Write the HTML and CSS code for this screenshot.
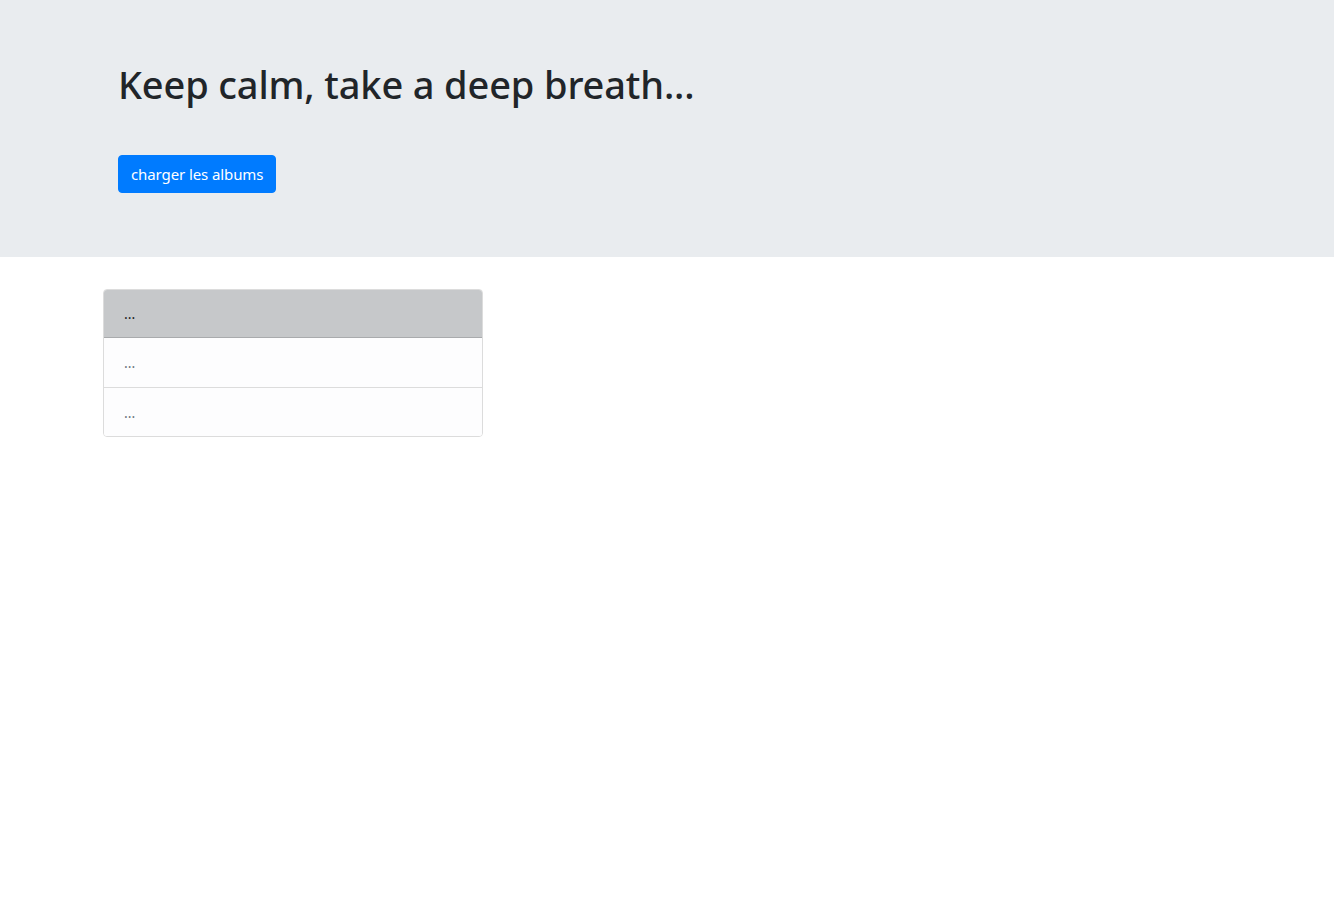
FILE: index.html
```html
<!DOCTYPE html>
<html lang="fr">
<head>
<meta charset="utf-8">
<title>Albums</title>
<link rel="stylesheet" href="styles.css">
</head>
<body>
<header class="jumbotron">
  <h1 class="title">Keep calm, take a deep breath...</h1>
  <button class="btn-primary" type="button">charger les albums</button>
</header>
<main class="content">
  <ul class="list-group">
    <li class="list-item active">...</li>
    <li class="list-item">...</li>
    <li class="list-item">...</li>
  </ul>
</main>
</body>
</html>
```
FILE: styles.css
```css
* { box-sizing: border-box; }
html, body { margin: 0; padding: 0; }
body {
  font-family: "Noto Sans", "Open Sans", "Liberation Sans", sans-serif;
  font-size: 16px;
  line-height: 1.5;
  color: #212529;
  background: #fff;
}
.jumbotron {
  background: #e9ecef;
  height: 257px;
  padding: 60px 0 0 118px;
  display: flex;
  flex-direction: column;
  align-items: flex-start;
}
.title {
  margin: 0;
  font-size: 38px;
  font-weight: 500;
  line-height: 48px;
  color: #212529;
  letter-spacing: -0.15px;
}
.btn-primary {
  margin-top: 47px;
  height: 38px;
  padding: 0 12px;
  background: #007bff;
  color: #fff;
  border: 1px solid #007bff;
  border-radius: 4px;
  font-family: inherit;
  font-size: 15px;
  letter-spacing: -0.1px;
}
.content {
  padding: 32px 0 0 103px;
}
.list-group {
  list-style: none;
  margin: 0;
  padding: 0;
  width: 380px;
  border: 1px solid #dcdcdc;
  border-radius: 4px;
  overflow: hidden;
}
.list-item {
  height: 49px;
  padding: 0 20px;
  display: flex;
  align-items: center;
  background: #fdfdfe;
  color: #6c757d;
  font-size: 14px;
  border-top: 1px solid #dcdcdc;
}
.list-item:first-child { border-top: none; }
.list-item.active {
  background: #c6c8ca;
  color: #1b1e21;
  border-bottom: 1px solid #a9abad;
  height: 48px;
}
.list-item.active + .list-item { border-top: none; }
```
